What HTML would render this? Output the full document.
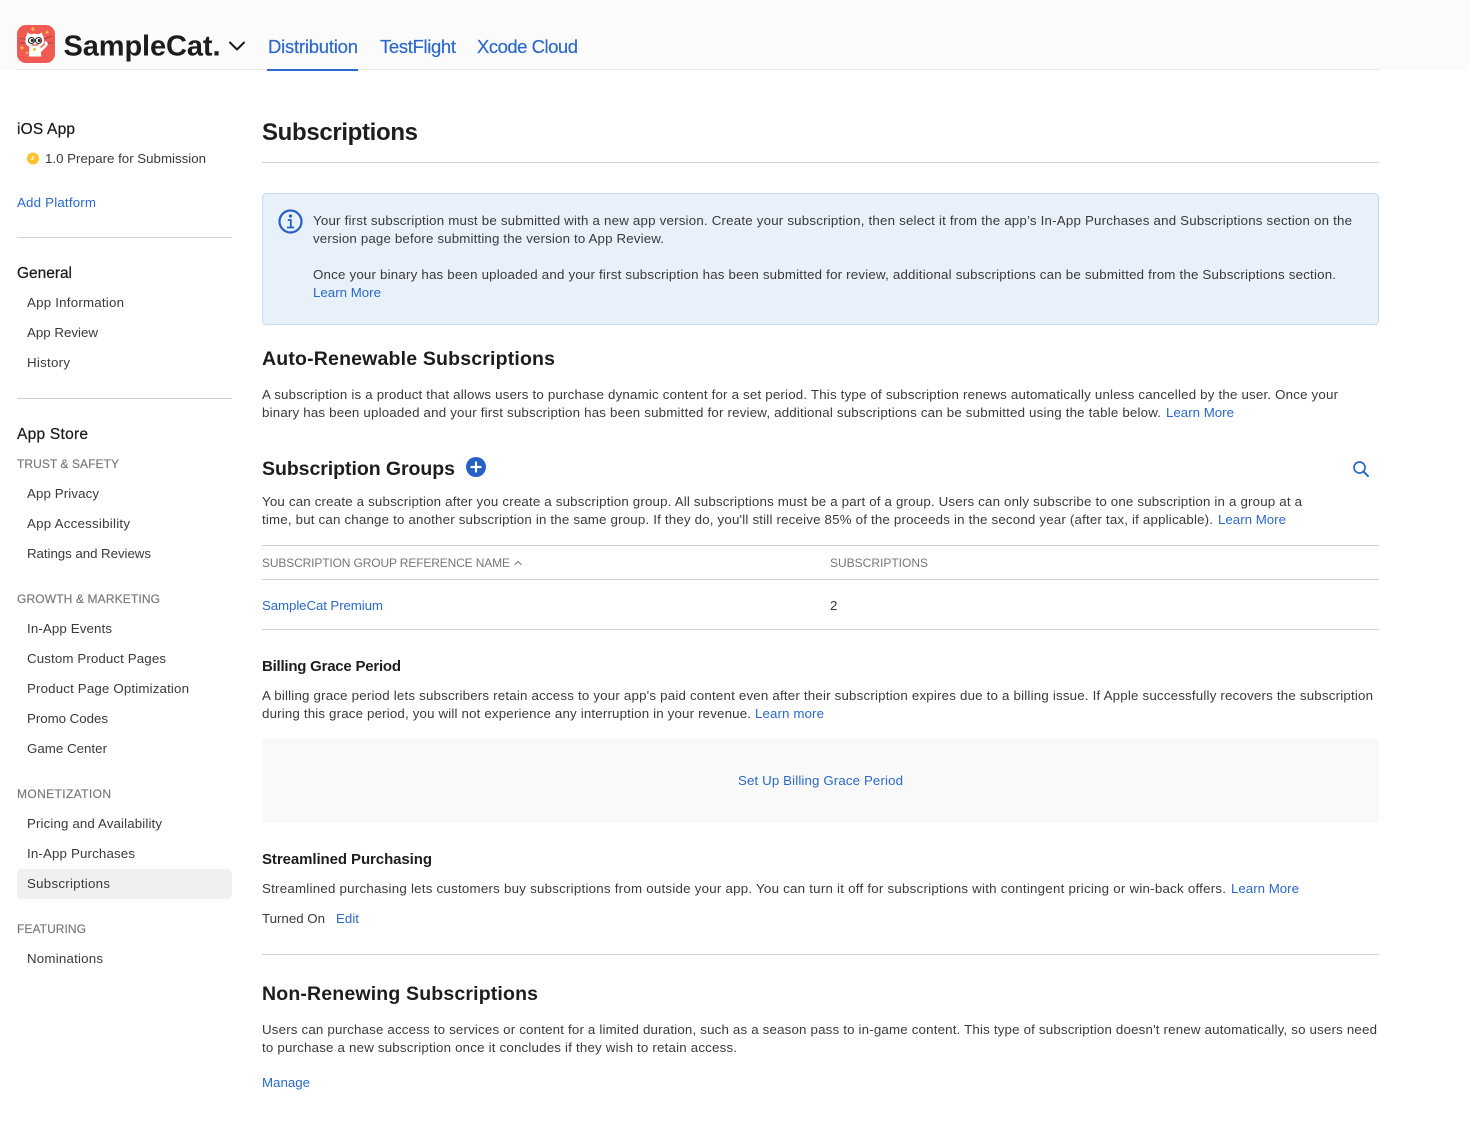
<!DOCTYPE html>
<html lang="en">
<head>
<meta charset="utf-8">
<title>Subscriptions - SampleCat</title>
<style>
html,body{margin:0;padding:0;background:#fff;width:1470px;height:1127px;overflow:hidden}
svg{display:block}
text{font-family:"Liberation Sans",sans-serif;white-space:pre}
.b{font-size:13.3px;fill:#3a3a3c}
.n{font-size:13.3px;fill:#3a3a3c}
.l{font-size:13.3px;fill:#2b69cc}
.c{font-size:12px;fill:#77777a;stroke:#77777a;stroke-width:.15px}
.ch{font-size:12px;fill:#77777a}
.s{font-size:15.5px;fill:#1d1d1f;stroke:#1d1d1f;stroke-width:.25px}
.h{font-size:19.5px;font-weight:700;fill:#1d1d1f}
.m{font-size:15px;font-weight:700;fill:#1d1d1f}
.t{font-size:18.5px;fill:#2b69cc;stroke:#2b69cc;stroke-width:.2px}
</style>
</head>
<body>
<svg xmlns="http://www.w3.org/2000/svg" width="1470" height="1127" viewBox="0 0 1470 1127">
<rect width="1470" height="1127" fill="#fff"/>
<rect width="1470" height="70" fill="#fbfbfc"/>
<rect x="17" y="69" width="1362" height="1" fill="#e4e4e6"/>
<rect x="267" y="69" width="91" height="2" fill="#2b69cc"/>

<!-- logo -->
<rect x="17" y="25" width="38" height="38" rx="9" fill="#ef5a53"/>
<path d="M20 38l7 2M19 43l7 0M44 39l8-3M45 43l8 0" stroke="#6b2a27" stroke-width=".6"/>
<path d="M25.500 41c0-3 .5-5 1.500-6.500l.5-2 3.500 1.800c2.500-.7 5-.7 7.500 0l3.500-1.800.5 2c1 1.500 1.500 3.500 1.500 6.500 0 4-4 7-9.300 7s-9.500-3-9.500-7z" fill="#fff"/>
<path d="M29.500 47h11l.8 9.500h-12.500z" fill="#fff"/>
<path d="M40 49l5-4.500-1-2.500 2-1 2 2.500-1 2.500-6 6z" fill="#fff"/>
<circle cx="31.500" cy="40.500" r="3" fill="#fff" stroke="#222" stroke-width="1"/>
<circle cx="38.500" cy="40.500" r="3" fill="#fff" stroke="#222" stroke-width="1"/>
<circle cx="32.200" cy="40.500" r="1.500" fill="#222"/><circle cx="39.200" cy="40.500" r="1.500" fill="#222"/>
<path d="M31.500 45h7" stroke="#e2524c" stroke-width="1.300"/>
<circle cx="34.500" cy="49.500" r="1.500" fill="#f5c232"/>
<path d="M33 26.500l.8 1.800 1.800.8-1.800.8-.8 1.800-.8-1.800-1.800-.8 1.800-.8zM22 45.500l.8 1.600 1.600.8-1.600.8-.8 1.600-.8-1.600-1.600-.8 1.600-.8zM27 51l.6 1.200 1.200.6-1.200.6-.6 1.200-.6-1.200-1.200-.6 1.200-.6zM47 30l.7 1.500 1.500.7-1.500.7-.7 1.500-.7-1.500-1.500-.7 1.500-.7z" fill="#f7c93c"/>

<text x="63.500" y="55.500" font-size="29" font-weight="700" fill="#1d1d1f" textLength="157">SampleCat.</text>
<path d="M230 42.500l7 7 7-7" fill="none" stroke="#1d1d1f" stroke-width="2" stroke-linecap="round" stroke-linejoin="round"/>
<text class="t" x="268" y="53" textLength="90">Distribution</text>
<text class="t" x="380" y="53" textLength="76">TestFlight</text>
<text class="t" x="477" y="53" textLength="101">Xcode Cloud</text>

<!-- sidebar -->
<text class="s" x="17" y="134" textLength="58">iOS App</text>
<circle cx="33" cy="158.500" r="6" fill="#fcc52f"/>
<path d="M33 155.800v3.200h-2.400" fill="none" stroke="#fff" stroke-width="1"/>
<text class="n" x="45" y="163" textLength="161">1.0 Prepare for Submission</text>
<text class="l" x="17" y="207" textLength="79">Add Platform</text>
<rect x="17" y="237" width="215" height="1" fill="#d2d2d4"/>
<text class="s" x="17" y="278" textLength="55">General</text>
<text class="n" x="27" y="307" textLength="97">App Information</text>
<text class="n" x="27" y="337" textLength="71">App Review</text>
<text class="n" x="27" y="367" textLength="43">History</text>
<rect x="17" y="398" width="215" height="1" fill="#d2d2d4"/>
<text class="s" x="17" y="439" textLength="71">App Store</text>
<text class="c" x="17" y="468" textLength="102">TRUST &amp; SAFETY</text>
<text class="n" x="27" y="498" textLength="72">App Privacy</text>
<text class="n" x="27" y="528" textLength="103">App Accessibility</text>
<text class="n" x="27" y="558" textLength="124">Ratings and Reviews</text>
<text class="c" x="17" y="603" textLength="143">GROWTH &amp; MARKETING</text>
<text class="n" x="27" y="633" textLength="85">In-App Events</text>
<text class="n" x="27" y="663" textLength="139">Custom Product Pages</text>
<text class="n" x="27" y="693" textLength="162">Product Page Optimization</text>
<text class="n" x="27" y="723" textLength="81">Promo Codes</text>
<text class="n" x="27" y="753" textLength="80">Game Center</text>
<text class="c" x="17" y="798" textLength="94">MONETIZATION</text>
<text class="n" x="27" y="828" textLength="135">Pricing and Availability</text>
<text class="n" x="27" y="858" textLength="108">In-App Purchases</text>
<rect x="17" y="869" width="215" height="30" rx="5" fill="#f0f0f1"/>
<text class="n" x="27" y="888" textLength="83">Subscriptions</text>
<text class="c" x="17" y="933" textLength="69">FEATURING</text>
<text class="n" x="27" y="963" textLength="76">Nominations</text>

<!-- main -->
<text x="262" y="140" font-size="24" font-weight="700" fill="#1d1d1f" textLength="156">Subscriptions</text>
<rect x="262" y="162" width="1117" height="1" fill="#d2d2d4"/>

<rect x="262.500" y="193.500" width="1116" height="131" rx="4" fill="#e8f0fa" stroke="#c6daee"/>
<circle cx="290.500" cy="221.500" r="11" fill="none" stroke="#2560c4" stroke-width="2.200"/>
<circle cx="290.500" cy="216" r="1.600" fill="#2560c4"/>
<path d="M287.800 220h3v7M287 227.500h7" fill="none" stroke="#2560c4" stroke-width="1.800"/>
<text class="b" x="313" y="225" textLength="1039">Your first subscription must be submitted with a new app version. Create your subscription, then select it from the app’s In-App Purchases and Subscriptions section on the</text>
<text class="b" x="313" y="243" textLength="351">version page before submitting the version to App Review.</text>
<text class="b" x="313" y="279" textLength="1023">Once your binary has been uploaded and your first subscription has been submitted for review, additional subscriptions can be submitted from the Subscriptions section.</text>
<text class="l" x="313" y="297" textLength="68">Learn More</text>

<text class="h" x="262" y="365" textLength="293">Auto-Renewable Subscriptions</text>
<text class="b" x="262" y="399" textLength="1076">A subscription is a product that allows users to purchase dynamic content for a set period. This type of subscription renews automatically unless cancelled by the user. Once your</text>
<text class="b" x="262" y="417" textLength="899">binary has been uploaded and your first subscription has been submitted for review, additional subscriptions can be submitted using the table below.</text>
<text class="l" x="1166" y="417" textLength="68">Learn More</text>

<text class="h" x="262" y="475" textLength="193">Subscription Groups</text>
<circle cx="476" cy="467" r="10" fill="#2560c4"/>
<path d="M476 462.500v9M471.500 467h9" stroke="#fff" stroke-width="2.200" stroke-linecap="round"/>
<circle cx="1359.500" cy="467.500" r="5.500" fill="none" stroke="#2b69cc" stroke-width="1.700"/>
<path d="M1363.500 471.500l4.500 4.500" stroke="#2b69cc" stroke-width="2" stroke-linecap="round"/>
<text class="b" x="262" y="506" textLength="1040">You can create a subscription after you create a subscription group. All subscriptions must be a part of a group. Users can only subscribe to one subscription in a group at a</text>
<text class="b" x="262" y="524" textLength="951">time, but can change to another subscription in the same group. If they do, you'll still receive 85% of the proceeds in the second year (after tax, if applicable).</text>
<text class="l" x="1218" y="524" textLength="68">Learn More</text>

<rect x="262" y="545" width="1117" height="1" fill="#d2d2d4"/>
<text class="ch" x="262" y="567" textLength="248">SUBSCRIPTION GROUP REFERENCE NAME</text>
<path d="M514.500 565l3.500-3.500 3.500 3.500" fill="none" stroke="#77777a" stroke-width="1"/>
<text class="ch" x="830" y="567" textLength="98">SUBSCRIPTIONS</text>
<rect x="262" y="579" width="1117" height="1" fill="#d2d2d4"/>
<text class="l" x="262" y="610" textLength="121">SampleCat Premium</text>
<text class="b" x="830" y="610" textLength="8">2</text>
<rect x="262" y="629" width="1117" height="1" fill="#d2d2d4"/>

<text class="m" x="262" y="671" textLength="139">Billing Grace Period</text>
<text class="b" x="262" y="700" textLength="1111">A billing grace period lets subscribers retain access to your app's paid content even after their subscription expires due to a billing issue. If Apple successfully recovers the subscription</text>
<text class="b" x="262" y="718" textLength="489">during this grace period, you will not experience any interruption in your revenue.</text>
<text class="l" x="755" y="718" textLength="69">Learn more</text>
<rect x="262" y="739" width="1117" height="84" rx="4" fill="#f9f9f9"/>
<text class="l" x="738" y="785" textLength="165">Set Up Billing Grace Period</text>

<text class="m" x="262" y="864" textLength="170">Streamlined Purchasing</text>
<text class="b" x="262" y="893" textLength="964">Streamlined purchasing lets customers buy subscriptions from outside your app. You can turn it off for subscriptions with contingent pricing or win-back offers.</text>
<text class="l" x="1231" y="893" textLength="68">Learn More</text>
<text class="b" x="262" y="923" textLength="63">Turned On</text>
<text class="l" x="336" y="923" textLength="23">Edit</text>
<rect x="262" y="954" width="1117" height="1" fill="#d2d2d4"/>

<text class="h" x="262" y="1000" textLength="276">Non-Renewing Subscriptions</text>
<text class="b" x="262" y="1034" textLength="1115">Users can purchase access to services or content for a limited duration, such as a season pass to in-game content. This type of subscription doesn't renew automatically, so users need</text>
<text class="b" x="262" y="1052" textLength="475">to purchase a new subscription once it concludes if they wish to retain access.</text>
<text class="l" x="262" y="1087" textLength="48">Manage</text>
</svg>
</body>
</html>
